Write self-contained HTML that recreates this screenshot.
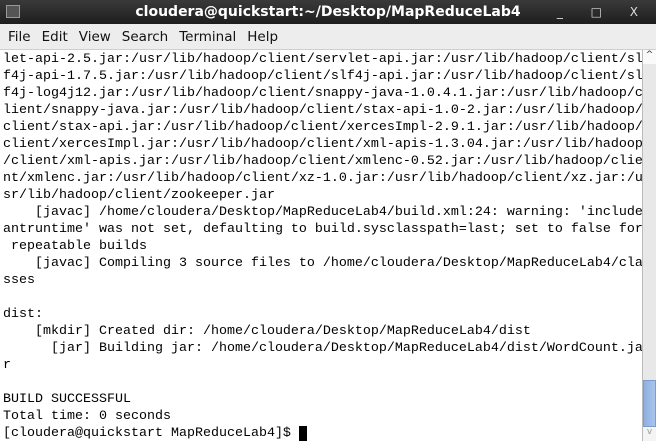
<!DOCTYPE html>
<html><head><style>
body{margin:0;width:656px;height:441px;overflow:hidden;background:#fff;font-family:"DejaVu Sans","Liberation Sans",sans-serif}
#title{position:absolute;left:0;top:0;width:656px;height:24px;background:linear-gradient(#3a3a3a,#1e1e1e);color:#fff;font-weight:bold;font-size:14px;text-align:center;line-height:24px}
#ico{position:absolute;left:6px;top:5px;width:14px;height:13px;background:#555;border:1px solid #999;box-sizing:border-box}
#ctl{position:absolute;right:6px;top:0;color:#ddd;font-weight:normal;font-size:12px;letter-spacing:12px}
#menu{position:absolute;left:0;top:24px;width:656px;height:25px;background:#ededed;border-bottom:1px solid #cfcfcf;font-size:13.5px;line-height:26px;color:#111}
#menu span{margin-left:8px;margin-right:3px}
#term{position:absolute;left:3px;top:51px;width:640px;height:390px;font-family:"Liberation Mono",monospace;font-size:13.33px;line-height:17px;white-space:pre;color:#000}
#sb{position:absolute;left:642px;top:50px;width:14px;height:391px;background:#e8e8e8;border-left:1px solid #bbb}
#up{position:absolute;left:0;top:0;width:13px;height:14px;background:#fafafa;font-size:9px;text-align:center;color:#333}
#th{position:absolute;left:0;top:330px;width:13px;height:47px;background:linear-gradient(90deg,#8fb0e0,#a9c4ec);border:1px solid #7c9ccc;box-sizing:border-box}
#dn{position:absolute;left:0;top:377px;width:13px;height:14px;background:#f4f4f4;font-size:9px;text-align:center;color:#999}
.cur{background:#000;color:#000}
</style></head><body>
<div id="title"><div id="ico"></div>cloudera@quickstart:~/Desktop/MapReduceLab4<span id="ctl">_ □ X</span></div>
<div id="menu"><span>File</span><span>Edit</span><span>View</span><span>Search</span><span>Terminal</span><span>Help</span></div>
<div id="term">let-api-2.5.jar:/usr/lib/hadoop/client/servlet-api.jar:/usr/lib/hadoop/client/sl
f4j-api-1.7.5.jar:/usr/lib/hadoop/client/slf4j-api.jar:/usr/lib/hadoop/client/sl
f4j-log4j12.jar:/usr/lib/hadoop/client/snappy-java-1.0.4.1.jar:/usr/lib/hadoop/c
lient/snappy-java.jar:/usr/lib/hadoop/client/stax-api-1.0-2.jar:/usr/lib/hadoop/
client/stax-api.jar:/usr/lib/hadoop/client/xercesImpl-2.9.1.jar:/usr/lib/hadoop/
client/xercesImpl.jar:/usr/lib/hadoop/client/xml-apis-1.3.04.jar:/usr/lib/hadoop
/client/xml-apis.jar:/usr/lib/hadoop/client/xmlenc-0.52.jar:/usr/lib/hadoop/clie
nt/xmlenc.jar:/usr/lib/hadoop/client/xz-1.0.jar:/usr/lib/hadoop/client/xz.jar:/u
sr/lib/hadoop/client/zookeeper.jar
    [javac] /home/cloudera/Desktop/MapReduceLab4/build.xml:24: warning: 'include
antruntime' was not set, defaulting to build.sysclasspath=last; set to false for
 repeatable builds
    [javac] Compiling 3 source files to /home/cloudera/Desktop/MapReduceLab4/cla
sses

dist:
    [mkdir] Created dir: /home/cloudera/Desktop/MapReduceLab4/dist
      [jar] Building jar: /home/cloudera/Desktop/MapReduceLab4/dist/WordCount.ja
r

BUILD SUCCESSFUL
Total time: 0 seconds
[cloudera@quickstart MapReduceLab4]$ <span class="cur"> </span></div>
<div id="sb"><div id="up">^</div><div id="th"></div><div id="dn">v</div></div>
</body></html>
